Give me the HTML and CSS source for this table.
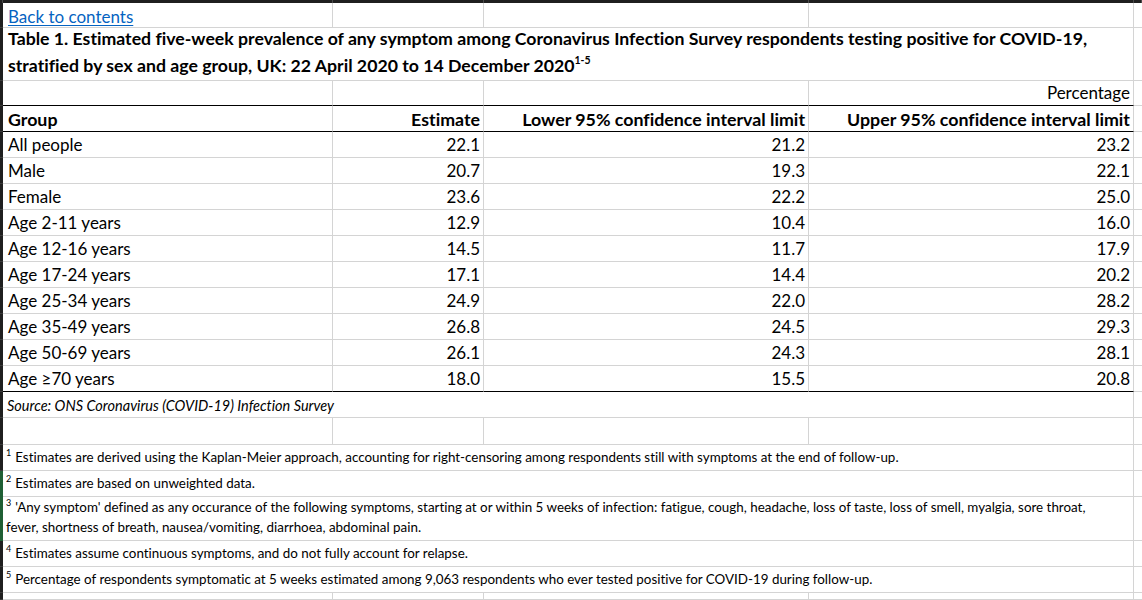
FILE: index.html
```html
<!DOCTYPE html>
<html lang="en">
<head>
<meta charset="utf-8">
<title>Table 1</title>
<link rel="stylesheet" href="styles.css">
</head>
<body>
<div class="sheet">
  <div class="ch"></div><div class="ch"></div><div class="ch"></div><div class="ch"></div><div class="ch"></div><div class="ch"></div>

  <div class="rh"></div>
  <div class="c linkcell"><a class="link" href="#">Back to contents</a></div><div class="c"></div><div class="c"></div><div class="c"></div><div class="e"></div>

  <div class="rh"></div>
  <div class="c title span4"><span>Table 1. Estimated five-week prevalence of any symptom among Coronavirus Infection Survey respondents testing positive for COVID-19,<br>stratified by sex and age group, UK: 22 April 2020 to 14 December 2020<sup class="tsup">1-5</sup></span></div><div class="e"></div>

  <div class="rh"></div>
  <div class="c bb"></div><div class="c bb"></div><div class="c bb"></div><div class="c bb num">Percentage</div><div class="e"></div>

  <div class="rh"></div>
  <div class="c bb bold">Group</div><div class="c bb bold num">Estimate</div><div class="c bb bold num">Lower 95% confidence interval limit</div><div class="c bb bold num">Upper 95% confidence interval limit</div><div class="e"></div>

  <div class="rh"></div>
  <div class="c">All people</div><div class="c num">22.1</div><div class="c num">21.2</div><div class="c num">23.2</div><div class="e"></div>
  <div class="rh"></div>
  <div class="c">Male</div><div class="c num">20.7</div><div class="c num">19.3</div><div class="c num">22.1</div><div class="e"></div>
  <div class="rh"></div>
  <div class="c">Female</div><div class="c num">23.6</div><div class="c num">22.2</div><div class="c num">25.0</div><div class="e"></div>
  <div class="rh"></div>
  <div class="c">Age 2-11 years</div><div class="c num">12.9</div><div class="c num">10.4</div><div class="c num">16.0</div><div class="e"></div>
  <div class="rh"></div>
  <div class="c">Age 12-16 years</div><div class="c num">14.5</div><div class="c num">11.7</div><div class="c num">17.9</div><div class="e"></div>
  <div class="rh"></div>
  <div class="c">Age 17-24 years</div><div class="c num">17.1</div><div class="c num">14.4</div><div class="c num">20.2</div><div class="e"></div>
  <div class="rh"></div>
  <div class="c">Age 25-34 years</div><div class="c num">24.9</div><div class="c num">22.0</div><div class="c num">28.2</div><div class="e"></div>
  <div class="rh"></div>
  <div class="c">Age 35-49 years</div><div class="c num">26.8</div><div class="c num">24.5</div><div class="c num">29.3</div><div class="e"></div>
  <div class="rh"></div>
  <div class="c">Age 50-69 years</div><div class="c num">26.1</div><div class="c num">24.3</div><div class="c num">28.1</div><div class="e"></div>
  <div class="rh"></div>
  <div class="c bb">Age ≥70 years</div><div class="c bb num">18.0</div><div class="c bb num">15.5</div><div class="c bb num">20.8</div><div class="e"></div>

  <div class="rh"></div>
  <div class="c span4 source">Source: ONS Coronavirus (COVID-19) Infection Survey</div><div class="e"></div>

  <div class="rh"></div>
  <div class="c"></div><div class="c"></div><div class="c"></div><div class="c"></div><div class="e"></div>

  <div class="rh"></div>
  <div class="c span4 note"><span><sup class="fn">1</sup>Estimates are derived using the Kaplan-Meier approach, accounting for right-censoring among respondents still with symptoms at the end of follow-up.</span></div><div class="e"></div>
  <div class="rh sel"></div>
  <div class="c span4 note"><span><sup class="fn">2</sup>Estimates are based on unweighted data.</span></div><div class="e"></div>
  <div class="rh sel"></div>
  <div class="c span4 note note2"><span><sup class="fn">3</sup>'Any symptom' defined as any occurance of the following symptoms, starting at or within 5 weeks of infection: fatigue, cough, headache, loss of taste, loss of smell, myalgia, sore throat,<br>fever, shortness of breath, nausea/vomiting, diarrhoea, abdominal pain.</span></div><div class="e"></div>
  <div class="rh"></div>
  <div class="c span4 note"><span><sup class="fn">4</sup>Estimates assume continuous symptoms, and do not fully account for relapse.</span></div><div class="e"></div>
  <div class="rh"></div>
  <div class="c span4 note"><span><sup class="fn">5</sup>Percentage of respondents symptomatic at 5 weeks estimated among 9,063 respondents who ever tested positive for COVID-19 during follow-up.</span></div><div class="e"></div>

  <div class="rh"></div>
  <div class="c"></div><div class="c"></div><div class="c"></div><div class="c"></div><div class="e"></div>
</div>
</body>
</html>
```

FILE: styles.css
```css
html, body {
  margin: 0;
  padding: 0;
  background: #ffffff;
}

body {
  font-family: Lato, "Liberation Sans", sans-serif;
  font-variant-ligatures: none;
  color: #000000;
  overflow: hidden;
}

.sheet {
  display: grid;
  grid-template-columns: 3px 330px 151px 325px 325px 1fr;
  grid-template-rows: 3px 25px 53px 25px 26px repeat(10, 26px) 26px 27px 26px 26px 44px 26px 26px 1fr;
  height: 600px;
  width: 1142px;
}

.sheet > div {
  box-sizing: border-box;
  min-width: 0;
}

.ch {
  background: #1f1f1f;
  border-right: 1px solid #4a4a4a;
}

.rh {
  background: #1f1f1f;
  border-bottom: 1px solid #3a3a3a;
}

.rh.sel {
  background: #1f5f34;
  border-bottom-color: #1f5f34;
}

.c {
  display: flex;
  align-items: flex-end;
  padding: 0 3px 3px 5px;
  border-right: 1px solid #d4d4d4;
  border-bottom: 1px solid #d4d4d4;
  font-size: 17px;
  line-height: 18px;
  white-space: nowrap;
}

.e {
  border-bottom: 1px solid #d4d4d4;
}

.bb {
  border-bottom-color: #000000;
}

.num {
  justify-content: flex-end;
}

.bold {
  font-weight: 700;
  font-size: 17.8px;
}

.span4 {
  grid-column: span 4;
}

.linkcell {
  padding-bottom: 1px;
}

.link {
  color: #0563c1;
  text-decoration: underline;
  text-underline-offset: 2px;
}

.title {
  font-weight: 700;
  font-size: 17.7px;
  line-height: 26.5px;
  padding-bottom: 1px;
}

.tsup {
  font-size: 10.5px;
  line-height: 0;
  vertical-align: 8px;
}

.source {
  font-style: italic;
  font-size: 14.5px;
  padding-left: 4px;
  padding-bottom: 2px;
}

.note {
  font-size: 13.4px;
  line-height: 18px;
  padding-left: 3px;
  padding-bottom: 4px;
}

.note2 {
  line-height: 20px;
  align-items: flex-start;
  padding-bottom: 0;
}

.fn {
  font-size: 9px;
  line-height: 0;
  vertical-align: 6px;
  margin-right: 4px;
}
```
